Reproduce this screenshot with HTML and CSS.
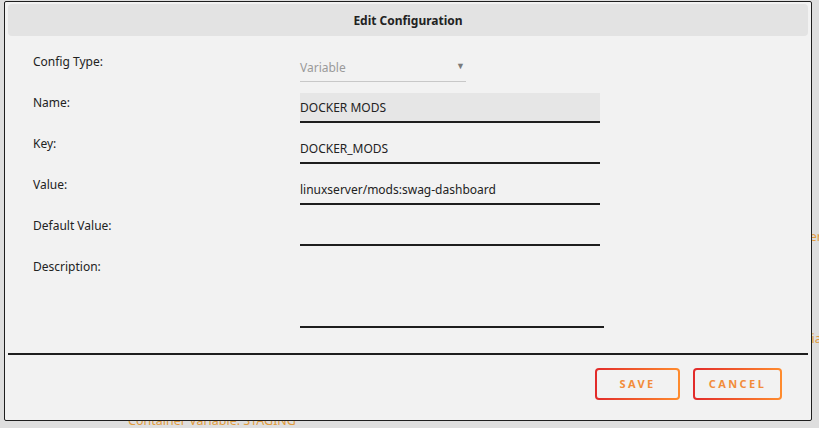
FILE: index.html
```html
<!DOCTYPE html>
<html>
<head>
<meta charset="utf-8">
<link rel="stylesheet" href="styles.css">
</head>
<body>
<div class="page">
  <div class="bg-line bg-a">Container Variable: SERVER</div>
  <div class="bg-line bg-b">Container Variable: DNSPLUGIN</div>
  <div class="bg-line bg-bottom">Container Variable: STAGING</div>
</div>
<div class="dialog">
  <div class="header">Edit Configuration</div>
  <div class="form">
    <div class="row">
      <label class="label">Config Type:</label>
      <div class="select"><span>Variable</span><span class="arrow">▼</span></div>
    </div>
    <div class="row">
      <label class="label">Name:</label>
      <div class="input filled">DOCKER MODS</div>
    </div>
    <div class="row">
      <label class="label">Key:</label>
      <div class="input">DOCKER_MODS</div>
    </div>
    <div class="row">
      <label class="label">Value:</label>
      <div class="input">linuxserver/mods:swag-dashboard</div>
    </div>
    <div class="row">
      <label class="label">Default Value:</label>
      <div class="input"></div>
    </div>
    <div class="row">
      <label class="label">Description:</label>
      <div class="textarea"></div>
    </div>
  </div>
  <div class="separator"></div>
  <div class="actions">
    <button class="btn">SAVE</button>
    <button class="btn">CANCEL</button>
  </div>
</div>
</body>
</html>
```
FILE: styles.css
```css
html, body {
  margin: 0;
  padding: 0;
}
body {
  background: #dedede;
  width: 819px;
  height: 428px;
  overflow: hidden;
  font-family: "Noto Sans", "Open Sans", sans-serif;
  font-size: 12px;
  color: #222;
  position: relative;
}
.page {
  display: flex;
  flex-direction: column;
}
.bg-line {
  color: #e09b3d;
  font-size: 12.5px;
  line-height: 18px;
  white-space: nowrap;
}
.bg-a {
  margin-top: 228px;
  padding-left: 764px;
}
.bg-b {
  margin-top: 84px;
  padding-left: 731px;
}
.bg-bottom {
  margin-top: 64px;
  padding-left: 128px;
}
.dialog {
  position: absolute;
  left: 4px;
  top: 1px;
  width: 800px;
  height: 418px;
  background: #f2f2f2;
  border: 1px solid #1e1e1e;
  border-radius: 2px;
  padding: 0 3px;
  display: flex;
  flex-direction: column;
}
.header {
  margin-top: 2px;
  height: 32px;
  background: #e3e3e3;
  border-radius: 4px;
  display: flex;
  align-items: center;
  justify-content: center;
  font-weight: bold;
  font-size: 12px;
  color: #222;
}
.form {
  display: flex;
  flex-direction: column;
  gap: 11px;
  padding-top: 16px;
  padding-left: 25px;
}
.row {
  display: flex;
  align-items: flex-start;
}
.label {
  width: 267px;
  line-height: 17px;
  padding-top: 1px;
  color: #222;
}
.select {
  width: 166px;
  height: 30px;
  box-sizing: border-box;
  border-bottom: 1px solid #c8c8c8;
  display: flex;
  align-items: center;
  justify-content: space-between;
  color: #9a9a9a;
  padding-top: 1px;
}
.arrow {
  font-size: 9px;
  color: #7a7a7a;
  padding-right: 1px;
  margin-top: -4px;
}
.input {
  width: 300px;
  height: 28px;
  border-bottom: 2px solid #1e1e1e;
  display: flex;
  align-items: center;
  color: #222;
}
.input.filled {
  background: #e6e6e6;
}
.textarea {
  width: 304px;
  height: 69px;
  border-bottom: 2px solid #1e1e1e;
}
.separator {
  margin-top: 25px;
  height: 1.5px;
  background: #1e1e1e;
}
.actions {
  display: flex;
  justify-content: flex-end;
  gap: 13px;
  padding-top: 13px;
  padding-right: 26px;
}
.btn {
  height: 32px;
  border: 2px solid transparent;
  border-radius: 4px;
  background: linear-gradient(#f2f2f2, #f2f2f2) padding-box,
              linear-gradient(90deg, #e22a2a, #ff8c2e) border-box;
  color: #f28c3a;
  font-family: "Noto Sans", "Open Sans", sans-serif;
  font-weight: bold;
  font-size: 11px;
  letter-spacing: 2.4px;
  padding: 0;
}
.btn:first-child {
  width: 85px;
}
.btn:last-child {
  width: 89px;
}
```
